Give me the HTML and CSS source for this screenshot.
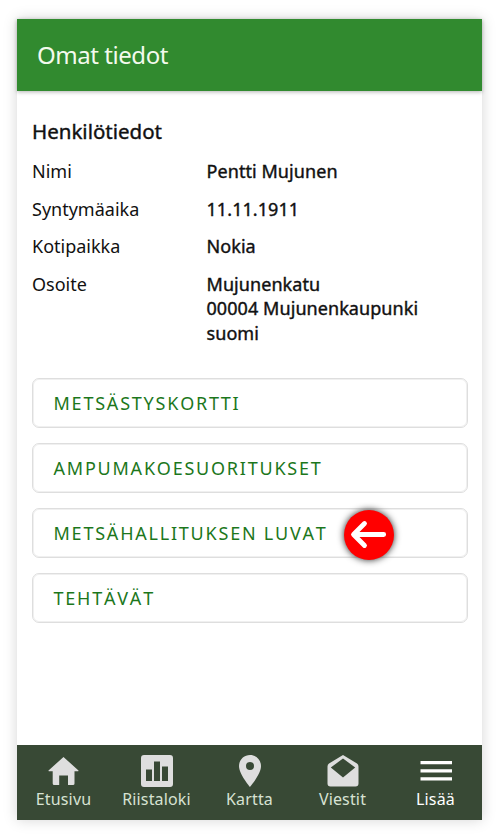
FILE: index.html
```html
<!DOCTYPE html>
<html lang="fi">
<head>
<meta charset="utf-8">
<title>Omat tiedot</title>
<link rel="stylesheet" href="styles.css">
</head>
<body>
<div class="phone">
  <header class="header"><h1 class="title">Omat tiedot</h1></header>
  <main class="content">
    <h2 class="section-title">Henkilötiedot</h2>
    <dl class="details">
      <dt>Nimi</dt><dd>Pentti Mujunen</dd>
      <dt>Syntymäaika</dt><dd>11.11.1911</dd>
      <dt>Kotipaikka</dt><dd>Nokia</dd>
      <dt>Osoite</dt><dd>Mujunenkatu<br>00004 Mujunenkaupunki<br>suomi</dd>
    </dl>
    <div class="links">
      <a class="link"><span>METSÄSTYSKORTTI</span></a>
      <a class="link"><span>AMPUMAKOESUORITUKSET</span></a>
      <a class="link"><span>METSÄHALLITUKSEN LUVAT</span>
        <span class="pointer"><svg width="50" height="50" viewBox="0 0 50 50"><path d="M39.7 24.5H10.5M20.5 13.5L9.5 24.5L20.5 35.5" fill="none" stroke="#fff" stroke-width="4.8" stroke-linecap="round" stroke-linejoin="round"/></svg></span>
      </a>
      <a class="link"><span>TEHTÄVÄT</span></a>
    </div>
  </main>
  <nav class="nav">
    <a class="tab"><svg width="32" height="32" viewBox="0 0 32 32"><path d="M15.5 2L.5 15.5Q.3 16.3 1.5 16.3H4.7V28.5Q4.7 30 6.2 30H11.2V20.5H20V30H25Q26.5 30 26.5 28.5V16.3H29.5Q30.7 16.3 30.5 15.5Z"/></svg><span>Etusivu</span></a>
    <a class="tab"><svg width="32" height="32" viewBox="0 0 32 32"><path fill-rule="evenodd" d="M3 0H29Q32 0 32 3V29Q32 32 29 32H3Q0 32 0 29V3Q0 0 3 0ZM5 14.5V26H11V14.5ZM13 6.5V26H19V6.5ZM21 11.5V26H27V11.5Z"/></svg><span>Riistaloki</span></a>
    <a class="tab"><svg width="32" height="32" viewBox="0 0 32 32"><path fill-rule="evenodd" d="M16 0C9.8 0 5 4.9 5 11C5 19.2 16 32 16 32S27 19.2 27 11C27 4.9 22.2 0 16 0ZM16 7A4 4 0 1 1 16 15A4 4 0 1 1 16 7Z"/></svg><span>Kartta</span></a>
    <a class="tab"><svg width="32" height="32" viewBox="0 0 32 32"><path fill-rule="evenodd" d="M16 0L30 8.5Q31.5 9.5 31.5 11.5V28.5Q31.5 31.5 28.5 31.5H3.5Q.5 31.5 .5 28.5V11.5Q.5 9.5 2 8.5ZM16 3.5L3.8 12.5L16 22.5L28.2 12.5Z"/></svg><span>Viestit</span></a>
    <a class="tab tab-active"><svg width="32" height="32" viewBox="0 0 32 32"><path d="M.5 6H32.5V9.2H.5ZM.5 14.2H32.5V17.4H.5ZM.5 22.2H32.5V25.4H.5Z"/></svg><span>Lisää</span></a>
  </nav>
</div>
</body>
</html>
```
FILE: styles.css
```css
* { box-sizing: border-box; }
body {
  margin: 0;
  padding: 19px 18px 19px 17px;
  background: #fff;
  color: #111;
  font-family: "Noto Sans", "Open Sans", sans-serif;
  font-size: 18px;
  line-height: 24.5px;
}
h1, h2, dl, dd { margin: 0; font-weight: 400; }
.phone {
  display: flex;
  flex-direction: column;
  height: 801px;
  background: #fff;
  box-shadow: 0 0 13px rgba(0, 0, 0, .17);
}
.header {
  display: flex;
  align-items: center;
  height: 72px;
  padding-left: 20px;
  background: #318a2f;
  box-shadow: 0 1px 4px rgba(0, 0, 0, .3);
}
.title {
  color: #f3faed;
  font-size: 24px;
  line-height: 32px;
  letter-spacing: -.45px;
}
.content { flex: 1; padding: 26px 14px 0 15px; }
.section-title {
  font-size: 20.5px;
  line-height: 28px;
  -webkit-text-stroke: .4px currentColor;
}
.details {
  display: grid;
  grid-template-columns: 174.5px 1fr;
  row-gap: 13px;
  margin-top: 14px;
}
.details dd {
  letter-spacing: .07px;
  -webkit-text-stroke: .4px currentColor;
}
.links {
  display: flex;
  flex-direction: column;
  gap: 15px;
  margin-top: 33px;
}
.link {
  display: flex;
  align-items: center;
  height: 50px;
  padding-left: 20.5px;
  border: 1px solid #dedede;
  border-radius: 7px;
  box-shadow: inset 0 0 0 1px #f0f0f0;
  color: #1c771c;
  font-kerning: none;
  letter-spacing: 1.78px;
}
.pointer {
  width: 50px;
  height: 50px;
  margin: 3px 0 0 16px;
  border-radius: 50%;
  background: #f00;
  box-shadow: 0 0 7px rgba(0, 0, 0, .85);
}
.pointer svg { display: block; }
.nav {
  display: grid;
  grid-template-columns: repeat(5, 1fr);
  height: 75px;
  padding-top: 10px;
  background: #384935;
}
.tab {
  display: flex;
  flex-direction: column;
  align-items: center;
  color: #d7e2d3;
  font-size: 16px;
  line-height: 24px;
  letter-spacing: .15px;
}
.tab svg { fill: #dedede; }
.tab-active { color: #fff; }
.tab-active svg { fill: #fff; }
```
